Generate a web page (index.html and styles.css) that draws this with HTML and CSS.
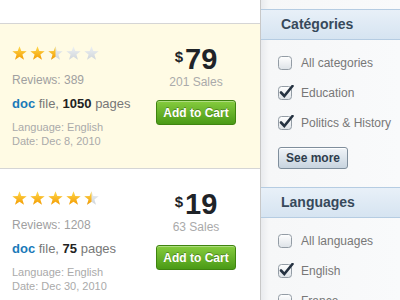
FILE: index.html
```html
<!DOCTYPE html>
<html lang="fr">
<head>
    <meta charset="UTF-8">
    <meta name="viewport" content="width=device-width, initial-scale=1.0">
    <title>Documents</title>
    <link rel="stylesheet" href="styles.css">
</head>
<body>
    <!-- shared shapes for stars and checkboxes -->
    <svg class="defs" width="0" height="0">
        <defs>
            <linearGradient id="gold" x1="0" y1="0" x2="0" y2="1">
                <stop offset="0" stop-color="#ffd94e"/>
                <stop offset="1" stop-color="#f39b00"/>
            </linearGradient>
            <linearGradient id="grey" x1="0" y1="0" x2="0" y2="1">
                <stop offset="0" stop-color="#eef1f3"/>
                <stop offset="1" stop-color="#cfd5db"/>
            </linearGradient>
            <linearGradient id="boxfill" x1="0" y1="0" x2="0" y2="1">
                <stop offset="0" stop-color="#ffffff"/>
                <stop offset="1" stop-color="#dde2e7"/>
            </linearGradient>
            <clipPath id="half"><rect width="7.5" height="15"/></clipPath>
            <polygon id="star" points="7.5,0.3 9.3,5 14.7,5.2 10.4,8.5 12,13.8 7.5,10.8 3,13.8 4.6,8.5 0.3,5.2 5.7,5"/>
            <rect id="box" x="0.5" y="1.5" width="13" height="13" rx="3" fill="url(#boxfill)" stroke="#939ca5"/>
            <path id="tick" d="M3 7.5 L6.3 11 L14.5 1" fill="none" stroke="#253241" stroke-width="2.6" stroke-linecap="round"/>
        </defs>
    </svg>

    <div class="page">
        <div class="results">
            <div class="result-cut"></div>

            <div class="item item-featured">
                <div class="info">
                    <svg class="stars" width="88" height="15">
                        <use href="#star" fill="url(#gold)"/>
                        <use href="#star" x="18" fill="url(#gold)"/>
                        <use href="#star" x="36" fill="url(#grey)"/>
                        <use href="#star" transform="translate(36 0)" clip-path="url(#half)" fill="url(#gold)"/>
                        <use href="#star" x="54" fill="url(#grey)"/>
                        <use href="#star" x="72" fill="url(#grey)"/>
                    </svg>
                    <p class="reviews">Reviews: 389</p>
                    <p class="file"><span class="type">doc</span> file, <b>1050</b> pages</p>
                    <p class="meta">Language: English</p>
                    <p class="meta">Date: Dec 8, 2010</p>
                </div>
                <div class="buy">
                    <p class="price"><span class="currency">$</span>79</p>
                    <p class="sales">201 Sales</p>
                    <button class="cart-btn">Add to Cart</button>
                </div>
            </div>

            <div class="item">
                <div class="info">
                    <svg class="stars" width="88" height="15">
                        <use href="#star" fill="url(#gold)"/>
                        <use href="#star" x="18" fill="url(#gold)"/>
                        <use href="#star" x="36" fill="url(#gold)"/>
                        <use href="#star" x="54" fill="url(#gold)"/>
                        <use href="#star" x="72" fill="url(#grey)"/>
                        <use href="#star" transform="translate(72 0)" clip-path="url(#half)" fill="url(#gold)"/>
                    </svg>
                    <p class="reviews">Reviews: 1208</p>
                    <p class="file"><span class="type">doc</span> file, <b>75</b> pages</p>
                    <p class="meta">Language: English</p>
                    <p class="meta">Date: Dec 30, 2010</p>
                </div>
                <div class="buy">
                    <p class="price"><span class="currency">$</span>19</p>
                    <p class="sales">63 Sales</p>
                    <button class="cart-btn">Add to Cart</button>
                </div>
            </div>
        </div>

        <div class="sidebar">
            <div class="filter">
                <h2 class="filter-title">Catégories</h2>
                <ul class="options">
                    <li><svg class="check" width="17" height="16"><use href="#box"/></svg>All categories</li>
                    <li><svg class="check" width="17" height="16"><use href="#box"/><use href="#tick"/></svg>Education</li>
                    <li><svg class="check" width="17" height="16"><use href="#box"/><use href="#tick"/></svg>Politics &amp; History</li>
                </ul>
                <button class="more-btn">See more</button>
            </div>

            <div class="filter">
                <h2 class="filter-title">Languages</h2>
                <ul class="options">
                    <li><svg class="check" width="17" height="16"><use href="#box"/></svg>All languages</li>
                    <li><svg class="check" width="17" height="16"><use href="#box"/><use href="#tick"/></svg>English</li>
                    <li><svg class="check" width="17" height="16"><use href="#box"/></svg>France</li>
                </ul>
            </div>
        </div>
    </div>
</body>
</html>
```

FILE: styles.css
```css
body {
    margin: 0;
    font-family: "Liberation Sans", Arial, sans-serif;
    background-color: #fff;
}

.defs {
    position: absolute;
}

.page {
    display: flex;
    width: 400px;
    height: 300px;
    overflow: hidden;
}

/* results column */
.results {
    flex: none;
    width: 260px;
    border-right: 1px solid #c8c8c8;
}

.result-cut {
    height: 23px;
    border-bottom: 1px solid #d5d5d5;
}

.item {
    display: flex;
    height: 144px;
    padding: 0 14px 0 12px;
    border-bottom: 1px solid #d5d5d5;
}

.item-featured {
    background-color: #fffbe4;
}

.info {
    flex: 1;
    padding-top: 22px;
}

.info p {
    margin: 0;
}

.stars {
    display: block;
    height: 15px;
}

.reviews {
    margin-top: 12px !important;
    font-size: 12px;
    line-height: 14px;
    color: #a0a0a0;
}

.file {
    margin-top: 9px !important;
    margin-bottom: 8px !important;
    font-size: 13px;
    line-height: 16px;
    color: #777;
}

.file .type {
    font-weight: bold;
    color: #1a7ab9;
}

.file b {
    color: #222;
}

.meta {
    font-size: 11px;
    line-height: 14px;
    color: #aaa;
}

.buy {
    width: 100px;
    padding-top: 19px;
    text-align: center;
}

.buy p {
    margin: 0;
}

.price {
    font-size: 29px;
    line-height: 32px;
    font-weight: bold;
    color: #1f2328;
}

.currency {
    font-size: 15px;
    line-height: 1;
    vertical-align: 7px;
    margin-right: 2px;
}

.sales {
    font-size: 12px;
    line-height: 14px;
    color: #aaa;
}

.cart-btn {
    width: 80px;
    height: 25px;
    margin-top: 11px;
    padding: 0;
    font-family: inherit;
    font-size: 12px;
    font-weight: bold;
    color: #fff;
    text-shadow: 0 -1px 0 rgba(0, 0, 0, 0.3);
    background: linear-gradient(#86cc3e, #4a9a16);
    border: 1px solid #3f8410;
    border-radius: 3px;
    box-shadow: inset 0 1px 0 rgba(255, 255, 255, 0.35);
}

/* sidebar filters */
.sidebar {
    flex: 1;
    padding-top: 9px;
    background: linear-gradient(to right, #e9ebee, #f6f7f8 8px, #f9fafb);
}

.filter {
    margin-bottom: 18px;
}

.filter-title {
    margin: 0;
    height: 29px;
    padding-left: 20px;
    font-size: 14px;
    line-height: 29px;
    color: #37495b;
    background: linear-gradient(#e8f0f8, #d6e4f1);
    border-top: 1px solid #b5cce2;
    border-bottom: 1px solid #b5cce2;
}

.options {
    list-style: none;
    margin: 0;
    padding: 8px 0 0 17px;
}

.options li {
    display: flex;
    align-items: center;
    gap: 6px;
    height: 30px;
    font-size: 12px;
    color: #777;
}

.check {
    flex: none;
}

.more-btn {
    width: 70px;
    height: 22px;
    margin: 9px 0 0 17px;
    padding: 0;
    font-family: inherit;
    font-size: 12px;
    font-weight: bold;
    color: #2e3d4c;
    background: linear-gradient(#f0f4f8, #c8d4df);
    border: 1px solid #7f8e9c;
    border-radius: 3px;
    box-shadow: inset 0 1px 0 #fff;
}
```
